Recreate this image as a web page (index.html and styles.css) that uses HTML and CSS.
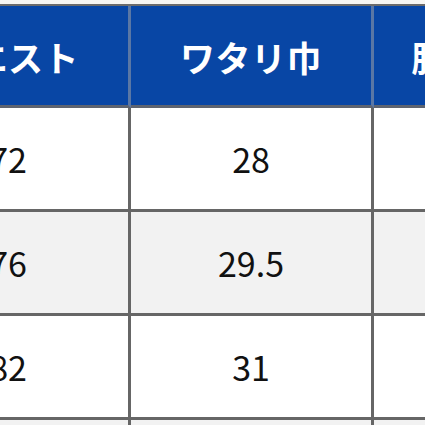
FILE: index.html
```html
<!DOCTYPE html>
<html lang="ja">
<head>
<meta charset="utf-8">
<link rel="stylesheet" href="styles.css">
</head>
<body>
<div class="viewport">
  <div class="size-table">
    <div class="cell head">ウエスト</div>
    <div class="cell head">ワタリ巾</div>
    <div class="cell head head-wide">股上・股下</div>

    <div class="cell">72</div>
    <div class="cell">28</div>
    <div class="cell"></div>

    <div class="cell alt">76</div>
    <div class="cell alt">29.5</div>
    <div class="cell alt"></div>

    <div class="cell">82</div>
    <div class="cell">31</div>
    <div class="cell"></div>

    <div class="cell alt">88</div>
    <div class="cell alt">32.5</div>
    <div class="cell alt"></div>
  </div>
</div>
</body>
</html>
```

FILE: styles.css
```css
html, body {
  margin: 0;
  padding: 0;
  background: #ffffff;
}

.viewport {
  width: 425px;
  height: 425px;
  overflow: hidden;
  background: #f7f6f3;
  padding-top: 4px;
  box-sizing: border-box;
}

.size-table {
  margin-left: -115px;
  width: 732px;
  display: grid;
  grid-template-columns: repeat(3, 243px);
  grid-template-rows: 102px repeat(4, 104px);
  border-top: 2px solid #6c6c6c;
  border-left: 3px solid #666666;
  font-family: "Noto Sans CJK JP", "Noto Sans", sans-serif;
}

.cell {
  box-sizing: border-box;
  display: flex;
  align-items: center;
  justify-content: center;
  border-right: 3px solid #666666;
  border-bottom: 3px solid #666666;
  background: #ffffff;
  color: #111111;
  font-size: 34px;
  font-weight: 400;
  white-space: nowrap;
}

.cell.alt {
  background: #f2f2f2;
}

.cell.head {
  background: #0846a5;
  color: #ffffff;
  font-size: 35px;
  font-weight: 700;
  letter-spacing: 0.5px;
  border-right-color: #5a77a5;
  border-bottom-color: #5e6470;
  padding-top: 2px;
}

.cell.head-wide {
  padding-left: 12px;
}
```
